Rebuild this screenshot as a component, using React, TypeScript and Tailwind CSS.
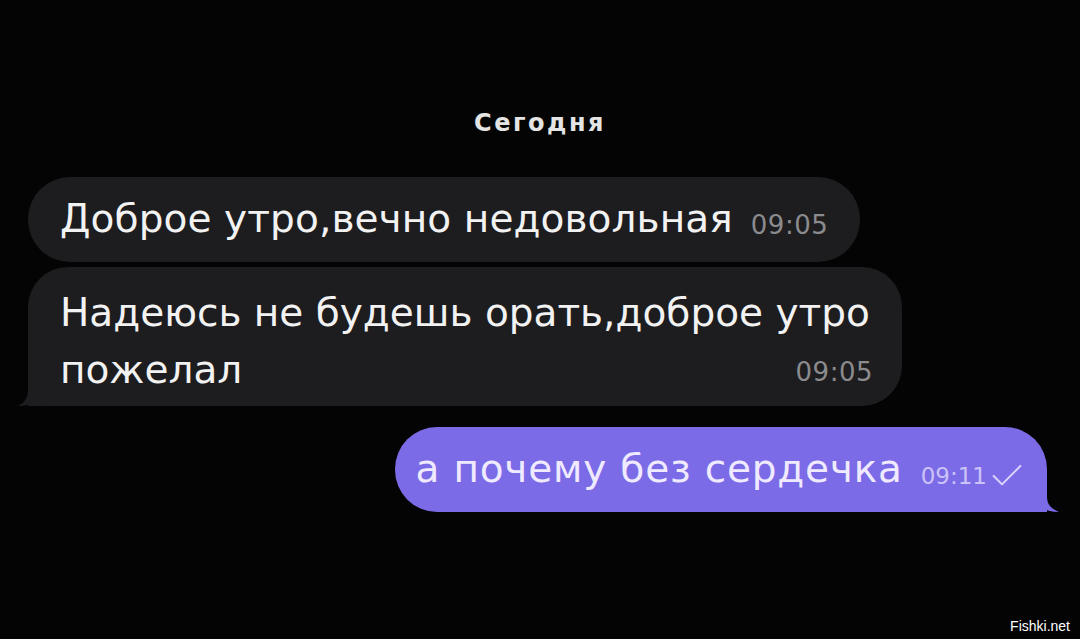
import { Check } from "lucide-react";

function TailLeft({ color }: { color: string }) {
  return (
    <svg
      className="absolute -left-[10px] bottom-0"
      width="34"
      height="30"
      viewBox="0 0 34 30"
      fill={color}
    >
      <path d="M10 0 V14 C10 22 7 26 0 30 C7 30 13 28 17 25 C21 28 27 30 34 30 V0 Z" />
    </svg>
  );
}

function TailRight({ color }: { color: string }) {
  return (
    <svg
      className="absolute -right-[12px] bottom-0"
      width="36"
      height="30"
      viewBox="0 0 36 30"
      fill={color}
    >
      <path d="M24 0 V14 C24 22 27 26 36 30 C28 30 22 28 18 25 C14 28 8 30 0 30 V0 Z" />
    </svg>
  );
}

export default function App() {
  return (
    <div
      className="relative h-[639px] w-full overflow-hidden bg-[#040404]"
      style={{ fontFamily: '"DejaVu Sans", "Liberation Sans", sans-serif' }}
    >
      <div className="flex flex-col px-[28px] pt-[105px]">
        {/* date */}
        <div className="mb-[36px] text-center text-[24px] font-bold tracking-[2.5px] text-[#e4e4e4]">
          Сегодня
        </div>

        {/* incoming */}
        <div className="flex flex-col items-start gap-[5px]">
          <div className="flex h-[85px] items-center rounded-[42px] bg-[#1d1d1f] pl-[32px] pr-[32px]">
            <span className="text-[39px] tracking-[0.1px] text-[#f2f2f2]">
              Доброе утро,вечно недовольная
            </span>
            <span className="ml-[18px] mt-[12px] text-[26px] tracking-[0.5px] text-[#8b8b8d]">
              09:05
            </span>
          </div>

          <div className="relative flex w-[874px] flex-col rounded-[40px] rounded-bl-none bg-[#1d1d1f] pb-[8px] pl-[32px] pr-[29px] pt-[17px]">
            <p className="text-[39px] leading-[57px] text-[#f2f2f2]">
              Надеюсь не будешь орать,доброе утро
            </p>
            <div className="flex items-end justify-between">
              <span className="text-[39px] leading-[57px] text-[#f2f2f2]">пожелал</span>
              <span className="mb-[6px] text-[26px] tracking-[0.5px] text-[#8b8b8d]">09:05</span>
            </div>
            <TailLeft color="#1d1d1f" />
          </div>
        </div>

        {/* outgoing */}
        <div className="mt-[21px] flex justify-end pr-[5px]">
          <div className="relative flex h-[85px] items-center rounded-[42px] rounded-br-none bg-[#7c6be6] pl-[20px] pr-[20px]">
            <span className="text-[39px] tracking-[0.8px] text-[#efeaff]">а почему без сердечка</span>
            <span className="ml-[18px] mt-[14px] text-[23px] text-[#cbc2f7]">09:11</span>
            <Check className="ml-[0px] mt-[12px] h-[40px] w-[40px] text-[#dcd5fb]" strokeWidth={1.2} />
            <TailRight color="#7c6be6" />
          </div>
        </div>
      </div>

      <div
        className="absolute bottom-[2px] right-[10px] text-[14px] text-white [text-shadow:0_0_2px_#000]"
        style={{ fontFamily: '"Liberation Sans", sans-serif' }}
      >
        Fishki.net
      </div>
    </div>
  );
}
